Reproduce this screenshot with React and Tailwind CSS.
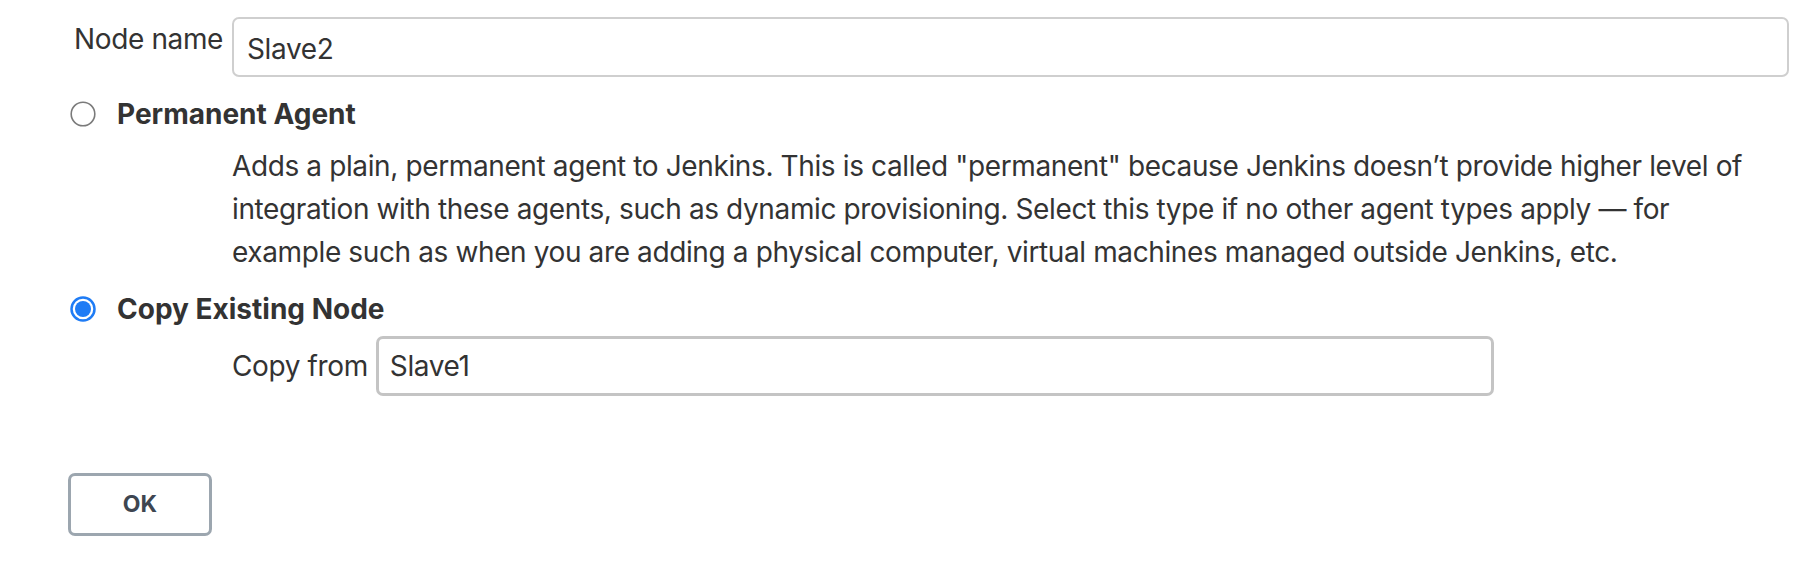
import React from "react";

function Radio({ checked }) {
  return checked ? (
    <svg width="26" height="26" viewBox="0 0 26 26" className="shrink-0">
      <circle cx="13" cy="13" r="11.5" fill="#fff" stroke="#1f7cf5" strokeWidth="2.5" />
      <circle cx="13" cy="13" r="8" fill="#1f7cf5" />
    </svg>
  ) : (
    <svg width="26" height="26" viewBox="0 0 26 26" className="shrink-0">
      <circle cx="13" cy="13" r="11.8" fill="#fff" stroke="#7a7a7a" strokeWidth="1.6" />
    </svg>
  );
}

export default function App() {
  return (
    <div className="min-h-[564px] w-[1798px] bg-white text-[#333] text-[28px] leading-[43px] tracking-[-0.38px] font-['Inter',sans-serif] pl-[68px] pr-[9px] pt-[17px]">
      <div className="flex items-start">
        <div className="w-[164px] pr-[9px] pt-[5px] text-right leading-[34px] shrink-0">Node name</div>
        <div className="flex-1 h-[60px] border-2 border-[#cfcfcf] rounded-[7px] px-[13px] flex items-center pt-[4px]">Slave2</div>
      </div>

      <div className="flex items-center mt-[20px] pl-[2px] h-[34px]">
        <Radio />
        <span className="ml-[21px] font-bold tracking-normal">Permanent Agent</span>
      </div>
      <div className="pl-[164px] pr-[34px] mt-[14px]">
        Adds a plain, permanent agent to Jenkins. This is called "permanent" because Jenkins doesn’t provide higher level of integration with these agents, such as dynamic provisioning. Select this type if no other agent types apply — for example such as when you are adding a physical computer, virtual machines managed outside Jenkins, etc.
      </div>

      <div className="flex items-center mt-[18px] pl-[2px] h-[34px]">
        <Radio checked />
        <span className="ml-[21px] font-bold tracking-normal">Copy Existing Node</span>
      </div>
      <div className="flex items-start mt-[10px] pl-[164px]">
        <div className="pr-[8px] leading-[36px] pt-[12px]">Copy from</div>
        <div className="w-[1118px] h-[60px] border-[3px] border-[#c4c4c4] rounded-[7px] px-[11px] flex items-center">Slave1</div>
      </div>

      <div className="mt-[77px]">
        <button className="w-[144px] h-[63px] border-[3px] border-[#9ca6af] rounded-[7px] bg-white text-[23px] font-bold tracking-normal text-[#3e4651] flex items-center justify-center">
          OK
        </button>
      </div>
    </div>
  );
}
